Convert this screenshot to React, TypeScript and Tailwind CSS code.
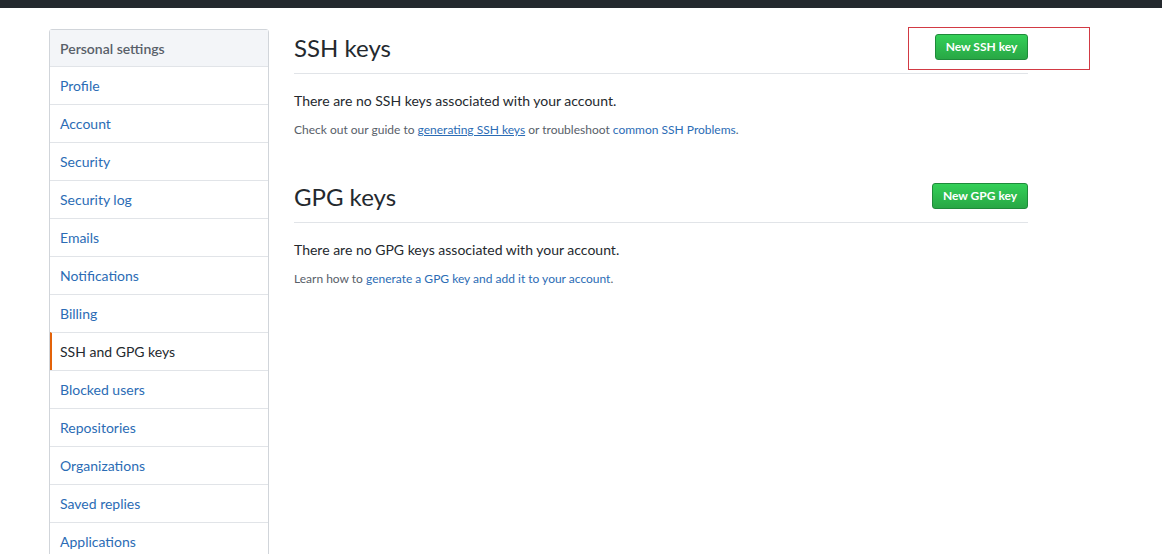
import React from 'react';

const navItems = [
  'Profile',
  'Account',
  'Security',
  'Security log',
  'Emails',
  'Notifications',
  'Billing',
  'SSH and GPG keys',
  'Blocked users',
  'Repositories',
  'Organizations',
  'Saved replies',
  'Applications',
];

const GreenButton: React.FC<{ label: string; width: string }> = ({ label, width }) => (
  <button
    className={`${width} mb-[2px] h-[26px] rounded-[3px] border border-[#1f8a3a] bg-gradient-to-b from-[#34d058] to-[#28a745] text-[12px] font-bold text-white`}
  >
    {label}
  </button>
);

const Sidebar: React.FC = () => (
  <nav className="w-[220px] shrink-0 rounded-[3px] border border-[#d1d5da] bg-white">
    <div className="flex h-[36px] items-center bg-[#f3f5f8] px-[10px] text-[14px] font-semibold text-[#586069]">
      Personal settings
    </div>
    {navItems.map((item) => {
      const selected = item === 'SSH and GPG keys';
      return (
        <div
          key={item}
          className={`flex h-[38px] items-center border-t border-[#e1e4e8] px-[10px] text-[14px] ${
            selected ? 'border-l-2 border-l-[#e36209] pl-[8px] text-[#24292e]' : 'text-[#2b6cb5]'
          }`}
        >
          {item}
        </div>
      );
    })}
  </nav>
);

const App: React.FC = () => {
  return (
    <div className="h-[554px] overflow-hidden bg-white font-['Lato','Liberation_Sans',sans-serif] text-[#24292e]">
      <div className="h-2 bg-[#24292e]" />
      <div className="flex pl-[49px] pt-[21px]">
        <Sidebar />
        <main className="ml-[25px] w-[734px]">
          <div className="relative flex h-[45px] items-center justify-between border-b border-[#e1e4e8] pb-[6px]">
            <h2 className="text-[24px] font-normal">SSH keys</h2>
            <GreenButton label="New SSH key" width="w-[93px]" />
            {/* annotation box drawn over the button */}
            <div className="pointer-events-none absolute left-[614px] top-[-2px] h-[43px] w-[182px] border border-[#d23a44]" />
          </div>
          <p className="mt-[17px] text-[14px] leading-[20px]">There are no SSH keys associated with your account.</p>
          <p className="mt-[10px] text-[12px] leading-[18px] text-[#586069]">
            Check out our guide to{' '}
            <a className="text-[#2b6cb5] underline">generating SSH keys</a> or troubleshoot{' '}
            <a className="text-[#2b6cb5]">common SSH Problems</a>.
          </p>

          <div className="mt-[39px] flex h-[45px] items-center justify-between border-b border-[#e1e4e8] pb-[6px]">
            <h2 className="text-[24px] font-normal">GPG keys</h2>
            <GreenButton label="New GPG key" width="w-[96px]" />
          </div>
          <p className="mt-[17px] text-[14px] leading-[20px]">There are no GPG keys associated with your account.</p>
          <p className="mt-[10px] text-[12px] leading-[18px] text-[#586069]">
            Learn how to <a className="text-[#2b6cb5]">generate a GPG key and add it to your account</a>.
          </p>
        </main>
      </div>
    </div>
  );
};

export default App;
